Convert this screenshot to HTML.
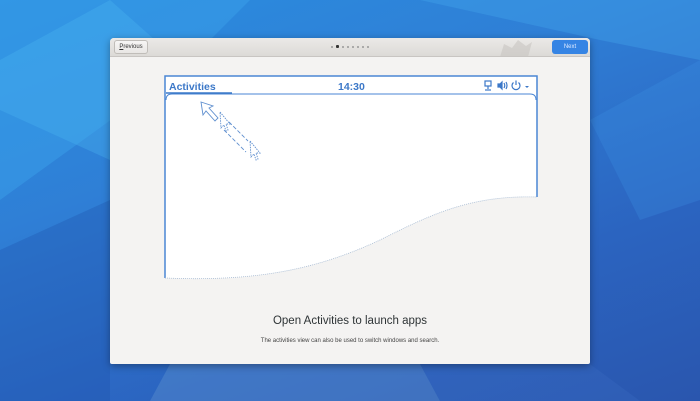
<!DOCTYPE html>
<html><head><style>
*{margin:0;padding:0;box-sizing:border-box}
body{width:700px;height:401px;overflow:hidden;position:relative;font-family:"Liberation Sans",sans-serif;background:linear-gradient(160deg,#2a8ee0 0%,#2f7fd6 35%,#2b64c0 70%,#2a56ae 100%)}
.bg{position:absolute;left:0;top:0}
.win{position:absolute;left:110px;top:38px;width:480px;height:326px;background:#f4f3f2;border-radius:4px 4px 2px 2px;box-shadow:0 2px 8px rgba(0,0,0,.35);overflow:hidden}
.hb{position:absolute;left:0;top:0;width:480px;height:19px;background:linear-gradient(#ebe9e7,#dcdad7);border-bottom:1px solid #c8c5c2}
.prev{position:absolute;left:4px;top:2px;width:34px;height:14px;border:1px solid #c0bdb9;border-radius:3px;background:linear-gradient(#f7f6f5,#e8e6e4);font-size:6px;color:#333;text-align:center;line-height:12px}
.next{position:absolute;left:442px;top:2px;width:36px;height:14px;border-radius:3px;background:#3584e4;color:#dfeaff;font-size:6px;text-align:center;line-height:14px}
.dot{position:absolute;top:8px;width:2px;height:2px;border-radius:1px;background:#999}
.t1{position:absolute;left:0;width:700px;top:315px;text-align:center;font-size:11.5px;color:#2e3436}
.t2{position:absolute;left:0;width:700px;top:338px;text-align:center;font-size:6px;color:#444}
</style></head><body>
<svg class="bg" width="700" height="401">
<polygon points="0,0 250,0 180,70 0,200" fill="#3aa0ea" opacity=".5"/>
<polygon points="0,60 110,0 200,80 110,160 0,110" fill="#4bb4f0" opacity=".35"/>
<polygon points="420,0 700,0 700,60 600,40" fill="#44a8ee" opacity=".35"/>
<polygon points="590,120 700,60 700,200 640,220" fill="#3b8fe0" opacity=".3"/>
<polygon points="0,250 110,200 110,401 0,401" fill="#1f4fa8" opacity=".3"/>
<polygon points="170,364 420,364 440,401 150,401" fill="#6fa3d4" opacity=".3"/>
<polygon points="420,364 590,364 640,401 440,401" fill="#3a6cc4" opacity=".3"/>
</svg>
<div class="win">
<div class="hb">
<div class="prev"><u>P</u>revious</div>
<div class="dot" style="left:221px"></div><div class="dot" style="left:226px;background:#333;width:3px;height:3px;top:7px"></div><div class="dot" style="left:232px"></div><div class="dot" style="left:237px"></div><div class="dot" style="left:242px"></div><div class="dot" style="left:247px"></div><div class="dot" style="left:252px"></div><div class="dot" style="left:257px"></div>
<svg style="position:absolute;left:388px;top:0" width="50" height="19"><path d="M2,19 L6,6 L14,10 L20,2 L28,8 L34,4 L30,19Z" fill="#c8c5c1" opacity=".6"/></svg>
<div class="next">Next</div>
</div>
</div>
<svg style="position:absolute;left:0;top:0" width="700" height="401">
<path d="M165,278 L165,76 L537,76 L537,197 C470,195 430,215 380,240 C320,268 260,282 165,278Z" fill="#fff"/>
<path d="M165,278 L165,76 L537,76 L537,197" fill="none" stroke="#4a86d4" stroke-width="1.5"/>
<path d="M165,278 C260,282 320,268 380,240 C430,215 470,195 537,197" fill="none" stroke="#a8bcd4" stroke-width=".8" stroke-dasharray="1,1"/>
<path d="M166,100 Q166,94 172,94 L530,94 Q536,94 536,100" fill="none" stroke="#4a86d4" stroke-width="1"/>
<line x1="166" y1="93" x2="232" y2="93" stroke="#3a78c8" stroke-width="1.5"/>
<text x="169" y="90" font-family="Liberation Sans" font-weight="bold" font-size="10.5" fill="#3c78c8">Activities</text>
<text x="338" y="90" font-family="Liberation Sans" font-weight="bold" font-size="10.5" fill="#3c78c8">14:30</text>
<g fill="none" stroke="#3c78c8" stroke-width="1.2">
<rect x="485" y="81" width="6" height="5"/><line x1="488" y1="86" x2="488" y2="89"/><line x1="485" y1="90" x2="491" y2="90"/>
<path d="M498,84 L500,84 L502,82 L502,89 L500,87 L498,87Z" fill="#3c78c8"/><path d="M504,83 Q505.5,85.5 504,88 M506,82 Q508,85.5 506,89"/>
<path d="M513.5,82.5 A4,4 0 1 0 518.5,82.5 M516,80.5 L516,85"/>
</g>
<path d="M525,86 L529,86 L527,88Z" fill="#3c78c8"/>
<g fill="none" stroke="#5f8fcf" stroke-width=".9">
<path d="M201,102 L213,106 L209,108 L218,118 L215,121 L206,111 L203,115Z"/>
<path d="M220,112 L230,124 L226,124 L228,130 L226,131 L224,125 L221,128Z" stroke-dasharray="1.5,1"/>
<path d="M250,141 L260,153 L256,153 L258,159 L256,160 L254,154 L251,157Z" stroke-dasharray="1.5,1"/>
<path d="M224,130 L246,152 M229,122 L248,141" stroke-dasharray="4,2"/>
</g>
</svg>
<div class="t1">Open Activities to launch apps</div>
<div class="t2">The activities view can also be used to switch windows and search.</div>
</body></html>
